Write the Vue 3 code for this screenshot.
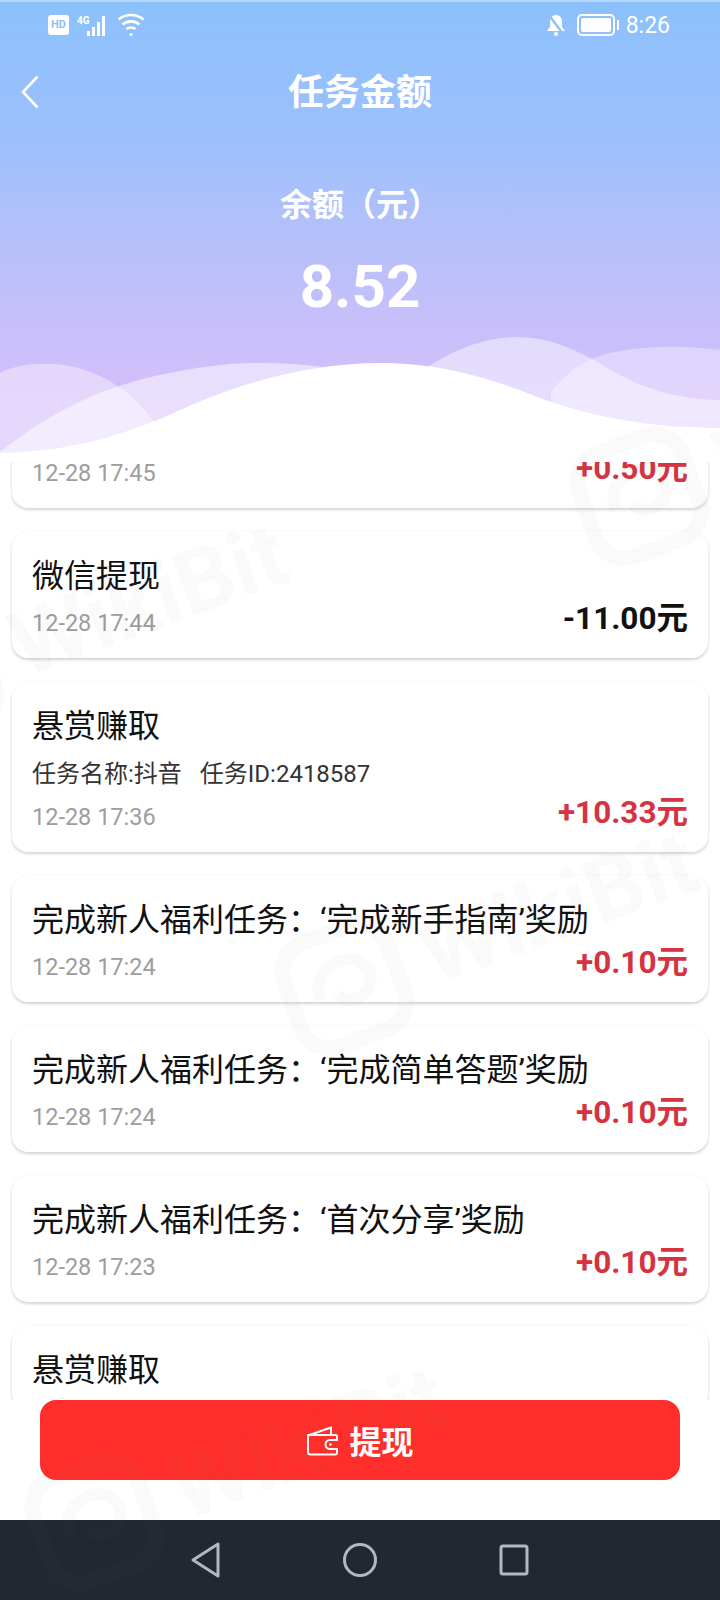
<script setup>
const records = [
  { id: 1, title: '悬赏赚取', time: '12-28 17:45', amount: '+0.50元' },
  { id: 2, title: '微信提现', time: '12-28 17:44', amount: '-11.00元', out: true },
  { id: 3, title: '悬赏赚取', sub: ['任务名称:抖音', '任务ID:2418587'], time: '12-28 17:36', amount: '+10.33元' },
  { id: 4, title: '完成新人福利任务：‘完成新手指南’奖励', time: '12-28 17:24', amount: '+0.10元' },
  { id: 5, title: '完成新人福利任务：‘完成简单答题’奖励', time: '12-28 17:24', amount: '+0.10元' },
  { id: 6, title: '完成新人福利任务：‘首次分享’奖励', time: '12-28 17:23', amount: '+0.10元' },
  { id: 7, title: '悬赏赚取' },
]
const marks = ['mark-a', 'mark-b', 'mark-c', 'mark-d']
</script>

<template>
  <div class="page">
    <header class="hero">
      <div class="status">
        <div class="status-left">
          <span class="hd">HD</span>
          <span class="net">4G</span>
          <svg class="bars" width="22" height="24" viewBox="0 0 22 24" fill="#fff">
            <rect x="0" y="18" width="3" height="5" />
            <rect x="5" y="14" width="3" height="9" />
            <rect x="10" y="9" width="3" height="14" />
            <rect x="15" y="3" width="3" height="20" />
          </svg>
          <svg class="wifi" width="28" height="26" viewBox="0 0 28 26" fill="none" stroke="#fff" stroke-width="2.6">
            <path d="M1.5 7.5C8.5 1.5 19.5 1.5 26.5 7.5" />
            <path d="M5.5 12.5C10.5 8.3 17.5 8.3 22.5 12.5" />
            <path d="M9.5 17C12 15 16 15 18.5 17" />
            <circle cx="14" cy="22.5" r="1.6" fill="#fff" stroke="none" />
          </svg>
        </div>
        <div class="status-right">
          <svg width="22" height="26" viewBox="0 0 22 24" fill="#fff">
            <path d="M11 2c-4 0-6 3-6 7v5l-3 4h18l-3-4V9c0-4-2-7-6-7z" />
            <circle cx="11" cy="21" r="2" />
            <path d="M3 1l16 21" stroke="#8fc0fb" stroke-width="2.4" />
          </svg>
          <span class="battery"><i></i></span>
          <span class="clock">8:26</span>
        </div>
      </div>

      <div class="nav">
        <svg class="back" width="18" height="34" viewBox="0 0 18 34" fill="none" stroke="#fff" stroke-width="2.6">
          <path d="M16.5 1.5L2 17l14.5 15.5" />
        </svg>
        <h1>任务金额</h1>
      </div>

      <p class="balance-label">余额（元）</p>
      <p class="balance">8.52</p>

      <svg class="waves" width="720" height="142" viewBox="0 320 720 142">
        <path fill="#fff" fill-opacity=".4" d="M0 373C20 362 60 360 90 372C130 388 150 410 180 462H0Z" />
        <path fill="#fff" fill-opacity=".5" d="M0 452C60 405 120 375 230 364C290 360 340 368 400 380V462H0Z" />
        <path fill="#fff" fill-opacity=".45" d="M420 372C460 345 490 337 520 337C560 338 590 358 620 375C650 392 690 400 720 400V462H420Z" />
        <path fill="#fff" fill-opacity=".35" d="M551 393C565 372 590 355 620 351C655 345 690 346 720 350V462H551Z" />
        <path fill="#fff" d="M0 453C60 452 115 440 180 410C250 378 320 363 380 363C440 363 490 378 540 398C600 420 660 428 720 428V462H0Z" />
      </svg>
    </header>

    <section class="list">
      <article v-for="item in records" :key="item.id" class="card">
        <h2>{{ item.title }}</h2>
        <p v-if="item.sub" class="sub">
          <span v-for="text in item.sub" :key="text">{{ text }}</span>
        </p>
        <div v-if="item.time" class="row">
          <time>{{ item.time }}</time>
          <strong :class="{ out: item.out }">{{ item.amount }}</strong>
        </div>
      </article>
    </section>

    <footer class="action">
      <button type="button">
        <svg width="33" height="31" viewBox="0 0 33 31" fill="none" stroke="#fff" stroke-width="2">
          <path d="M2 10.5L25 2.5V10" />
          <path d="M2 10.5V27a2.5 2.5 0 0 0 2.5 2.5H29.500a1.500 1.500 0 0 0 1.500-1.500V24H24a4.500 4.500 0 0 1 0-9h7v-3.500a1.500 1.500 0 0 0-1.500-1.500H2z" />
          <circle cx="24.500" cy="19.500" r="1.300" fill="#fff" stroke="none" />
        </svg>
        <span>提现</span>
      </button>
    </footer>

    <nav class="system-bar">
      <svg width="30" height="36" viewBox="0 0 30 36" fill="none" stroke="#b4b8be" stroke-width="3" stroke-linejoin="round">
        <path d="M27 2v32L2 18z" />
      </svg>
      <svg width="36" height="36" viewBox="0 0 36 36" fill="none" stroke="#b4b8be" stroke-width="3">
        <circle cx="18" cy="18" r="15.500" />
      </svg>
      <svg width="30" height="32" viewBox="0 0 30 32" fill="none" stroke="#b4b8be" stroke-width="3" stroke-linejoin="round">
        <rect x="2" y="2" width="26" height="28" rx="2" />
      </svg>
    </nav>

    <div v-for="mark in marks" :key="mark" class="mark" :class="mark">
      <svg width="130" height="130" viewBox="0 0 130 130" fill="none" stroke="currentColor" stroke-width="16">
        <rect x="10" y="10" width="110" height="110" rx="30" />
        <path d="M38 70C38 48 56 36 76 40C92 44 98 60 90 72C82 84 62 84 56 70" stroke-width="12" />
      </svg>
      <span>WikiBit</span>
    </div>
  </div>
</template>

<style scoped>
.page {
  position: relative;
  display: flex;
  flex-direction: column;
  width: 720px;
  height: 1600px;
  overflow: hidden;
  background: #fff;
  font-family: Roboto, "Noto Sans CJK SC", sans-serif;
}

.hero {
  position: relative;
  flex: none;
  height: 462px;
  color: #fff;
  text-align: center;
  background: linear-gradient(180deg, #8cc1fb 0%, #9dc0fb 30%, #b9c0fa 55%, #d0bffb 80%, #d6bffb 100%);
  border-top: 2px solid #b5d6fb;
  box-sizing: border-box;
}

.status {
  display: flex;
  justify-content: space-between;
  align-items: center;
  height: 46px;
  padding: 0 50px 0 48px;
}

.status-left,
.status-right {
  display: flex;
  align-items: center;
}

.hd {
  width: 21px;
  height: 20px;
  border-radius: 3px;
  background: #fff;
  color: #8cc1fb;
  font-size: 11px;
  font-weight: 700;
  line-height: 20px;
}

.net {
  margin: -10px 0 0 8px;
  font-size: 10px;
  font-weight: 700;
  width: 12px;
}

.bars {
  margin-left: -2px;
}

.wifi {
  margin-left: 8px;
}

.battery {
  position: relative;
  box-sizing: border-box;
  width: 38px;
  height: 22px;
  margin: 0 0 0 10px;
  padding: 2px;
  border: 2px solid #fff;
  border-radius: 5px;
}

.battery i {
  display: block;
  height: 100%;
  border-radius: 2px;
  background: #fff;
}

.battery::after {
  content: "";
  position: absolute;
  right: -6px;
  top: 4px;
  width: 2px;
  height: 10px;
  background: #fff;
}

.clock {
  margin-left: 11px;
  font-size: 23px;
}

.nav {
  position: relative;
  height: 86px;
}

.back {
  position: absolute;
  left: 21px;
  top: 27px;
}

h1 {
  margin: 0;
  font-size: 36px;
  font-weight: 700;
  line-height: 90px;
}

.balance-label {
  margin: 33px 0 0;
  font-size: 32px;
  font-weight: 700;
  line-height: 76px;
}

.balance {
  margin: 8px 0 0;
  font-size: 60px;
  font-weight: 700;
  line-height: 72px;
}

.waves {
  position: absolute;
  left: 0;
  bottom: 0;
  display: block;
}

.list {
  flex: 1;
  min-height: 0;
  overflow: hidden;
  display: flex;
  flex-direction: column;
  gap: 24px;
  padding: 0 12px;
}

.card {
  flex: none;
  box-sizing: border-box;
  padding: 24px 20px 20px;
  border-radius: 16px;
  background: #fff;
  box-shadow: 0 2px 3px rgba(0, 0, 0, 0.16), 0 0 4px rgba(0, 0, 0, 0.03);
}

.card:first-child {
  margin-top: -80px;
}

h2 {
  margin: 0;
  color: #111;
  font-size: 32px;
  font-weight: 400;
  line-height: 40px;
  white-space: nowrap;
}

.sub {
  display: flex;
  gap: 18px;
  margin: 13px 0 0;
  color: #333;
  font-size: 24px;
  line-height: 30px;
}

.row {
  display: flex;
  justify-content: space-between;
  align-items: center;
  height: 30px;
  margin-top: 12px;
}

.sub + .row {
  margin-top: 13px;
}

time {
  color: #9d9d9d;
  font-size: 23.5px;
}

strong {
  margin-bottom: 16px;
  color: #d5333f;
  font-size: 31.5px;
  font-weight: 700;
}

strong.out {
  color: #111;
}

.action {
  flex: none;
  height: 120px;
  padding: 0 40px;
  box-sizing: border-box;
}

button {
  display: flex;
  align-items: center;
  justify-content: center;
  gap: 10px;
  width: 100%;
  height: 80px;
  border: 0;
  border-radius: 16px;
  background: #ff2e2a;
  color: #fff;
  font-family: inherit;
  font-size: 32px;
  font-weight: 700;
}

.system-bar {
  flex: none;
  display: flex;
  justify-content: center;
  align-items: center;
  gap: 121px;
  height: 80px;
  background: #222831;
}

.mark {
  position: absolute;
  display: flex;
  align-items: center;
  gap: 20px;
  color: rgba(120, 120, 120, 0.035);
  font-size: 90px;
  font-weight: 700;
  line-height: 130px;
  white-space: nowrap;
  transform: rotate(-20deg);
  pointer-events: none;
}

.mark-a {
  left: -140px;
  top: 561px;
}

.mark-b {
  left: 270px;
  top: 869px;
}

.mark-c {
  left: 20px;
  top: 1404px;
}

.mark-d {
  left: 565px;
  top: 379px;
}
</style>
